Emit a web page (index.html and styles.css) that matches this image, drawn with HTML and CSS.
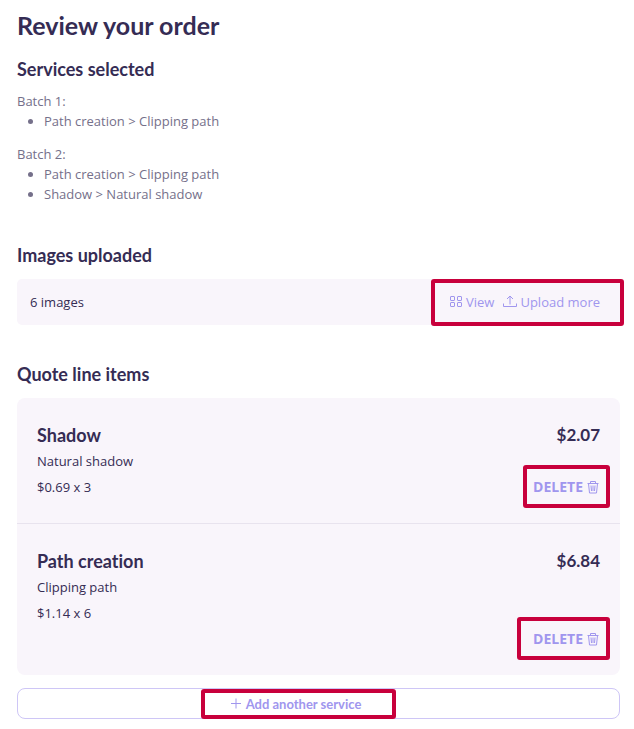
FILE: index.html
```html
<!DOCTYPE html>
<html lang="en">
<head>
    <meta charset="UTF-8">
    <meta name="viewport" content="width=device-width, initial-scale=1.0">
    <title>Review your order</title>
    <link rel="stylesheet" href="styles.css">
</head>
<body>
    <main class="order">
        <h1>Review your order</h1>

        <!-- Services -->
        <section class="section services">
            <h2>Services selected</h2>
            <div class="batch">
                <p>Batch 1:</p>
                <ul>
                    <li>Path creation &gt; Clipping path</li>
                </ul>
            </div>
            <div class="batch">
                <p>Batch 2:</p>
                <ul>
                    <li>Path creation &gt; Clipping path</li>
                    <li>Shadow &gt; Natural shadow</li>
                </ul>
            </div>
        </section>

        <!-- Images -->
        <section class="section">
            <h2>Images uploaded</h2>
            <div class="images-card">
                <span>6 images</span>
                <div class="images-actions marked marked-images">
                    <button type="button" class="link-button">
                        <svg class="icon" viewBox="0 0 14 14">
                            <rect x="1.5" y="1.5" width="4" height="4" rx="0.5" />
                            <rect x="8.5" y="1.5" width="4" height="4" rx="0.5" />
                            <rect x="1.5" y="7.5" width="4" height="4" rx="0.5" />
                            <rect x="8.5" y="7.5" width="4" height="4" rx="0.5" />
                        </svg>
                        View
                    </button>
                    <button type="button" class="link-button">
                        <svg class="icon" viewBox="0 0 14 14">
                            <path d="M0.5 8.5v3h13v-3M7 9.5V1M4 4l3-3 3 3" />
                        </svg>
                        Upload more
                    </button>
                </div>
            </div>
        </section>

        <!-- Quote -->
        <section class="section">
            <h2>Quote line items</h2>
            <div class="quote-card">
                <article class="item">
                    <div class="item-details">
                        <h3>Shadow</h3>
                        <p>Natural shadow</p>
                        <p>$0.69 x 3</p>
                    </div>
                    <div class="item-side">
                        <strong class="price">$2.07</strong>
                        <button type="button" class="link-button delete marked">
                            DELETE
                            <svg class="icon" viewBox="0 0 14 14">
                                <path d="M1.5 3.5h11M4.5 3.5v-2h5v2M2.5 3.5l1 9.5h7l1-9.5M5 5.5l0.5 5.5M7 5.5v5.5M9 5.5l-0.5 5.5" />
                            </svg>
                        </button>
                    </div>
                </article>
                <article class="item item-last">
                    <div class="item-details">
                        <h3>Path creation</h3>
                        <p>Clipping path</p>
                        <p>$1.14 x 6</p>
                    </div>
                    <div class="item-side">
                        <strong class="price">$6.84</strong>
                        <button type="button" class="link-button delete marked marked-wide">
                            DELETE
                            <svg class="icon" viewBox="0 0 14 14">
                                <path d="M1.5 3.5h11M4.5 3.5v-2h5v2M2.5 3.5l1 9.5h7l1-9.5M5 5.5l0.5 5.5M7 5.5v5.5M9 5.5l-0.5 5.5" />
                            </svg>
                        </button>
                    </div>
                </article>
            </div>
        </section>

        <button type="button" class="add-button">
            <span class="add-label marked marked-add">
                <svg class="icon icon-plus" viewBox="0 0 12 14">
                    <path d="M1 6.5h10M6 1.5v10" />
                </svg>
                Add another service
            </span>
        </button>
    </main>
</body>
</html>
```

FILE: styles.css
```css
:root {
    --text: #352c54;
    --muted: #75708a;
    --link: #a096ee;
    --panel: #f9f5fb;
    --line: #e8e3ee;
    --outline: #cec6f6;
    --mark: #c8003c;
}

* {
    box-sizing: border-box;
}

body {
    margin: 0;
    background-color: #fff;
    color: var(--text);
    font-family: "Open Sans", "Noto Sans", sans-serif;
    font-size: 13px;
    line-height: 20px;
}

h1,
h2,
h3,
p,
ul {
    margin: 0;
}

h1,
h2,
h3,
.price {
    font-family: Lato, "Open Sans", sans-serif;
    font-variant-ligatures: none;
}

.order {
    padding: 10px 14px 10px 17px;
}

h1 {
    font-size: 25px;
    line-height: 30px;
    font-weight: 700;
}

h2 {
    margin-bottom: 12px;
    font-size: 18px;
    line-height: 24px;
    font-weight: 700;
}

.section {
    margin-bottom: 37px;
}

/* Services */
.services {
    margin-top: 17px;
    margin-bottom: 39px;
}

.services h2 {
    margin-bottom: 10px;
}

.batch {
    color: var(--muted);
}

.batch + .batch {
    margin-top: 13px;
}

.batch ul {
    padding-left: 27px;
}

/* Buttons */
.link-button {
    display: inline-flex;
    align-items: center;
    gap: 3px;
    padding: 0;
    border: none;
    background: none;
    color: var(--link);
    font: inherit;
    cursor: pointer;
}

.icon {
    width: 14px;
    height: 14px;
    fill: none;
    stroke: currentColor;
    stroke-width: 1;
}

/* Images */
.images-card {
    display: flex;
    align-items: center;
    justify-content: space-between;
    height: 46px;
    padding: 0 20px 0 13px;
    border-radius: 5px;
    background-color: var(--panel);
}

.images-actions {
    display: flex;
    align-self: stretch;
    gap: 9px;
}

/* Quote */
.quote-card {
    border-radius: 8px;
    background-color: var(--panel);
}

.item {
    display: flex;
    justify-content: space-between;
    padding: 24px 20px 23px;
    line-height: 26px;
}

.item + .item {
    border-top: 1px solid var(--line);
}

.item-last {
    min-height: 152px;
}

.item h3,
.price {
    font-size: 18px;
    line-height: 26px;
    font-weight: 700;
}

.item .price {
    font-size: 17px;
}

.item-side {
    display: flex;
    flex-direction: column;
    align-items: flex-end;
    justify-content: space-between;
}

.delete {
    font-size: 14px;
    font-weight: 700;
}

.section:last-of-type {
    margin-bottom: 13px;
}

.add-button {
    display: flex;
    align-items: center;
    justify-content: center;
    width: 100%;
    height: 31px;
    padding: 0 46px 0 0;
    border: 1px solid var(--outline);
    border-radius: 8px;
    background-color: #fff;
    color: var(--link);
    font-family: Lato, "Open Sans", sans-serif;
    font-size: 13px;
    font-weight: 700;
    line-height: 20px;
    cursor: pointer;
}

.add-label {
    display: flex;
    align-items: center;
    gap: 4px;
}

.icon-plus {
    width: 12px;
}

/* Red frames drawn over the controls */
.marked {
    position: relative;
}

.marked::after {
    content: "";
    position: absolute;
    inset: -9px -10px -8px -10px;
    border: 4px solid var(--mark);
    border-radius: 3px;
    pointer-events: none;
}

.marked-wide::after {
    inset: -9px -10px -8px -16px;
}

.marked-images::after {
    inset: 0 -24px -1px -18px;
}

.marked-add::after {
    inset: -5px -35px -5px -29px;
}
```
